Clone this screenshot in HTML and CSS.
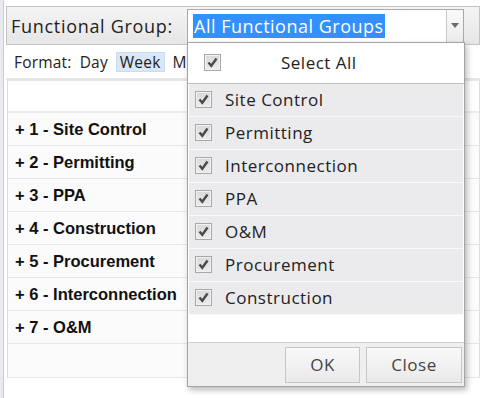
FILE: index.html
```html
<!DOCTYPE html>
<html>
<head>
<meta charset="utf-8">
<link rel="stylesheet" href="styles.css">
</head>
<body>
<div class="page">
  <div class="side"></div>
  <div class="main">
    <div class="toolbar">
      <span class="tb-label">Functional Group:</span>
      <div class="combo">
        <div class="combo-input"><span class="sel">All Functional Groups</span></div>
        <div class="combo-btn"><span class="tri"></span></div>
        <div class="popup">
          <div class="select-all">
            <span class="cb"><svg viewBox="0 0 15 15" width="15" height="15"><path d="M3.5 7.5 L6.3 10.8 L11.5 3.5" fill="none" stroke="#4a4a4a" stroke-width="2.4"/></svg></span>
            <span class="sa-text">Select All</span>
          </div>
          <ul class="items">
            <li><span class="cb"><svg viewBox="0 0 15 15" width="15" height="15"><path d="M3.5 7.5 L6.3 10.8 L11.5 3.5" fill="none" stroke="#4a4a4a" stroke-width="2.4"/></svg></span>Site Control</li>
            <li><span class="cb"><svg viewBox="0 0 15 15" width="15" height="15"><path d="M3.5 7.5 L6.3 10.8 L11.5 3.5" fill="none" stroke="#4a4a4a" stroke-width="2.4"/></svg></span>Permitting</li>
            <li><span class="cb"><svg viewBox="0 0 15 15" width="15" height="15"><path d="M3.5 7.5 L6.3 10.8 L11.5 3.5" fill="none" stroke="#4a4a4a" stroke-width="2.4"/></svg></span>Interconnection</li>
            <li><span class="cb"><svg viewBox="0 0 15 15" width="15" height="15"><path d="M3.5 7.5 L6.3 10.8 L11.5 3.5" fill="none" stroke="#4a4a4a" stroke-width="2.4"/></svg></span>PPA</li>
            <li><span class="cb"><svg viewBox="0 0 15 15" width="15" height="15"><path d="M3.5 7.5 L6.3 10.8 L11.5 3.5" fill="none" stroke="#4a4a4a" stroke-width="2.4"/></svg></span>O&amp;M</li>
            <li><span class="cb"><svg viewBox="0 0 15 15" width="15" height="15"><path d="M3.5 7.5 L6.3 10.8 L11.5 3.5" fill="none" stroke="#4a4a4a" stroke-width="2.4"/></svg></span>Procurement</li>
            <li><span class="cb"><svg viewBox="0 0 15 15" width="15" height="15"><path d="M3.5 7.5 L6.3 10.8 L11.5 3.5" fill="none" stroke="#4a4a4a" stroke-width="2.4"/></svg></span>Construction</li>
          </ul>
          <div class="spacer"></div>
          <div class="footer">
            <button class="btn btn-ok">OK</button>
            <button class="btn btn-close">Close</button>
          </div>
        </div>
      </div>
    </div>
    <div class="format">
      <span class="fmt-label">Format:</span>
      <span class="fmt-opt">Day</span>
      <span class="fmt-opt active">Week</span>
      <span class="fmt-opt">Month</span>
    </div>
    <div class="band"></div>
    <div class="grid">
      <div class="grid-head"></div>
      <div class="row">+ 1 - Site Control</div>
      <div class="row">+ 2 - Permitting</div>
      <div class="row">+ 3 - PPA</div>
      <div class="row">+ 4 - Construction</div>
      <div class="row">+ 5 - Procurement</div>
      <div class="row">+ 6 - Interconnection</div>
      <div class="row">+ 7 - O&amp;M</div>
      <div class="row empty"></div>
    </div>
  </div>
</div>
</body>
</html>
```
FILE: styles.css
```css
* { box-sizing: border-box; }
html, body { margin: 0; padding: 0; background: #fff; }
body { font-family: "Open Sans", "DejaVu Sans", sans-serif; color: #222; overflow: hidden; letter-spacing: 0.5px; }

.page { display: flex; height: 398px; width: 482px; }
.side { width: 4px; background: #e8eaef; border-right: 1px solid #c9ccd2; flex: none; }
.main { width: 474px; margin-left: 2px; padding-top: 6px; flex: none; }

.toolbar {
  height: 39px;
  border: 1px solid #c4c4c4;
  background: linear-gradient(#f4f4f4, #e6e6e6);
  display: flex;
  align-items: center;
  padding-left: 4px;
}
.tb-label { width: 176px; font-size: 18px; color: #222; flex: none; letter-spacing: 0.7px; }

.combo {
  position: relative;
  width: 277px;
  height: 34px;
  border: 1px solid #a9a9a9;
  background: #fff;
  display: flex;
  flex: none;
}
.combo-input { flex: 1; display: flex; align-items: center; padding-left: 5px; }
.sel { background: #3390ff; color: #fff; font-size: 18px; line-height: 24px; padding: 0 1px; }
.combo-btn {
  width: 17px;
  border-left: 1px solid #c8c8c8;
  background: linear-gradient(#fafafa, #ececec);
  display: flex; align-items: center; justify-content: center;
}
.tri { width: 0; height: 0; border-top: 5px solid #6a6a6a; border-left: 4px solid transparent; border-right: 4px solid transparent; }

.popup {
  position: absolute;
  top: 32px;
  left: -1px;
  width: 278px;
  height: 345px;
  background: #fff;
  border: 1px solid #a4a4a4;
  box-shadow: 2px 3px 6px rgba(0,0,0,0.28);
  display: flex;
  flex-direction: column;
  z-index: 5;
}
.select-all {
  height: 41px;
  border-bottom: 1px solid #c3c3c3;
  display: flex; align-items: center;
  padding-left: 16px;
  flex: none;
}
.sa-text { margin-left: 60px; font-size: 17px; }

.cb {
  width: 17px; height: 17px;
  border: 1px solid #a8a8a8;
  background: linear-gradient(#d9d9d9, #ececec);
  box-shadow: inset 0 0 0 1px #f2f2f2;
  display: flex; align-items: center; justify-content: center;
  flex: none;
}
.cb svg { display: block; }

.items { list-style: none; margin: 0; padding: 0 1px 0 1px; flex: none; }
.items li {
  height: 33px;
  background: #ebebed;
  border-bottom: 1px solid #fafafa;
  display: flex; align-items: center;
  padding-left: 6px;
  font-size: 17px;
  gap: 13px;
}
.spacer { flex: 1; }
.footer {
  height: 44px;
  border-top: 1px solid #d2d2d2;
  background: #efefef;
  display: flex;
  justify-content: flex-end;
  align-items: flex-start;
  padding: 4px 2px 0 0;
  gap: 6px;
  flex: none;
}
.btn {
  height: 36px;
  border: 1px solid #c6c6c6;
  background: linear-gradient(#f9f9f9, #e9e9e9);
  font-family: "Open Sans", "DejaVu Sans", sans-serif;
  font-size: 17px;
  letter-spacing: 0.5px;
  color: #444;
  padding: 0;
  margin: 0;
}
.btn-ok { width: 75px; }
.btn-close { width: 96px; }

.format {
  height: 33px;
  display: flex; align-items: center;
  padding-left: 8px;
  font-size: 15.5px;
  letter-spacing: 0.2px;
  color: #222;
  gap: 5px;
}
.fmt-opt { padding: 0 3px; line-height: 18px; }
.fmt-opt.active { background: #dae7f7; border: 1px solid #c9dbf1; }

.band { height: 3px; background: #e6e6e6; }

.grid { margin-left: 1px; border-left: 1px solid #dedede; border-right: 1px solid #dedede; }
.grid-head { height: 32px; background: #fff; border-bottom: 2px solid #ebebeb; }
.row {
  height: 33px;
  background: #fbfbfb;
  border-bottom: 1px solid #e6e6e6;
  display: flex; align-items: center;
  padding-left: 7px;
  font-family: "Liberation Sans", Arial, sans-serif;
  font-weight: bold;
  font-size: 16.5px;
  letter-spacing: 0;
  color: #111;
}
.row.empty { height: 34px; }
```
